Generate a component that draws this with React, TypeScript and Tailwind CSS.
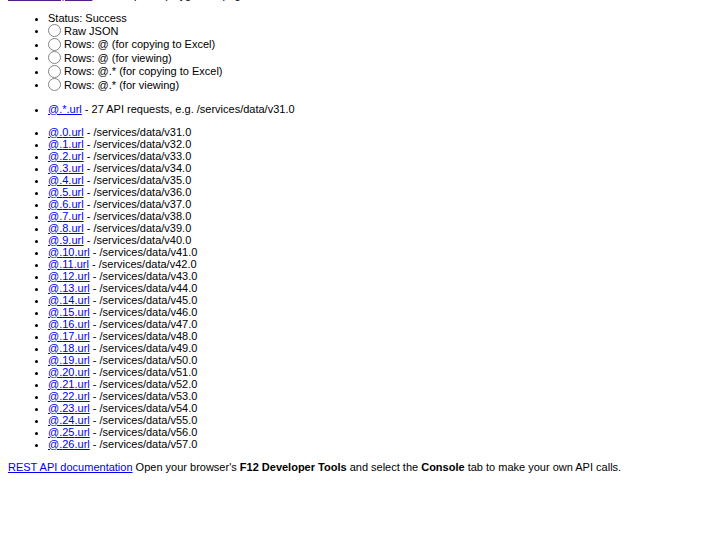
import React from "react";

const versions = Array.from({ length: 27 }, (_, i) => i);

export default function App() {
  const radios = [
    "Raw JSON",
    "Rows: @ (for copying to Excel)",
    "Rows: @ (for viewing)",
    "Rows: @.* (for copying to Excel)",
    "Rows: @.* (for viewing)",
  ];
  return (
    <div
      className="h-[537px] w-[715px] overflow-hidden bg-white px-2 text-[11px] leading-[12px] text-black"
      style={{ fontFamily: '"Liberation Sans", Arial, sans-serif' }}
    >
      <div className="mt-[-11px] h-[12px] whitespace-nowrap">
        <a className="text-[#551a8b] underline" href="#">Back to inspector</a>{" "}
        - API explorer playground page
      </div>
      <ul className="mt-[11px] list-disc pl-[40px]">
        <li className="h-[12px]">Status: Success</li>
        {radios.map((r) => (
          <li key={r} className="h-[13.5px]">
            <span className="inline-flex items-center h-[13.5px] align-top">
              <span className="mr-[3px] inline-block h-[13px] w-[13px] rounded-full border border-[#858585] bg-white" />
              <span>{r}</span>
            </span>
          </li>
        ))}
      </ul>
      <ul className="mt-[11px] list-disc pl-[40px]">
        <li className="h-[12px]">
          <a className="text-[#0000ee] underline" href="#">@.*.url</a> - 27 API requests, e.g. /services/data/v31.0
        </li>
      </ul>
      <ul className="mt-[11px] list-disc pl-[40px]">
        {versions.map((i) => (
          <li key={i} className="h-[12px]">
            <a className="text-[#0000ee] underline" href="#">@.{i}.url</a> - /services/data/v{31 + i}.0
          </li>
        ))}
      </ul>
      <p className="mt-[11px] h-[12px] whitespace-nowrap">
        <a className="text-[#0000ee] underline" href="#">REST API documentation</a> Open your browser's{" "}
        <b>F12 Developer Tools</b> and select the <b>Console</b> tab to make your own API calls.
      </p>
    </div>
  );
}
